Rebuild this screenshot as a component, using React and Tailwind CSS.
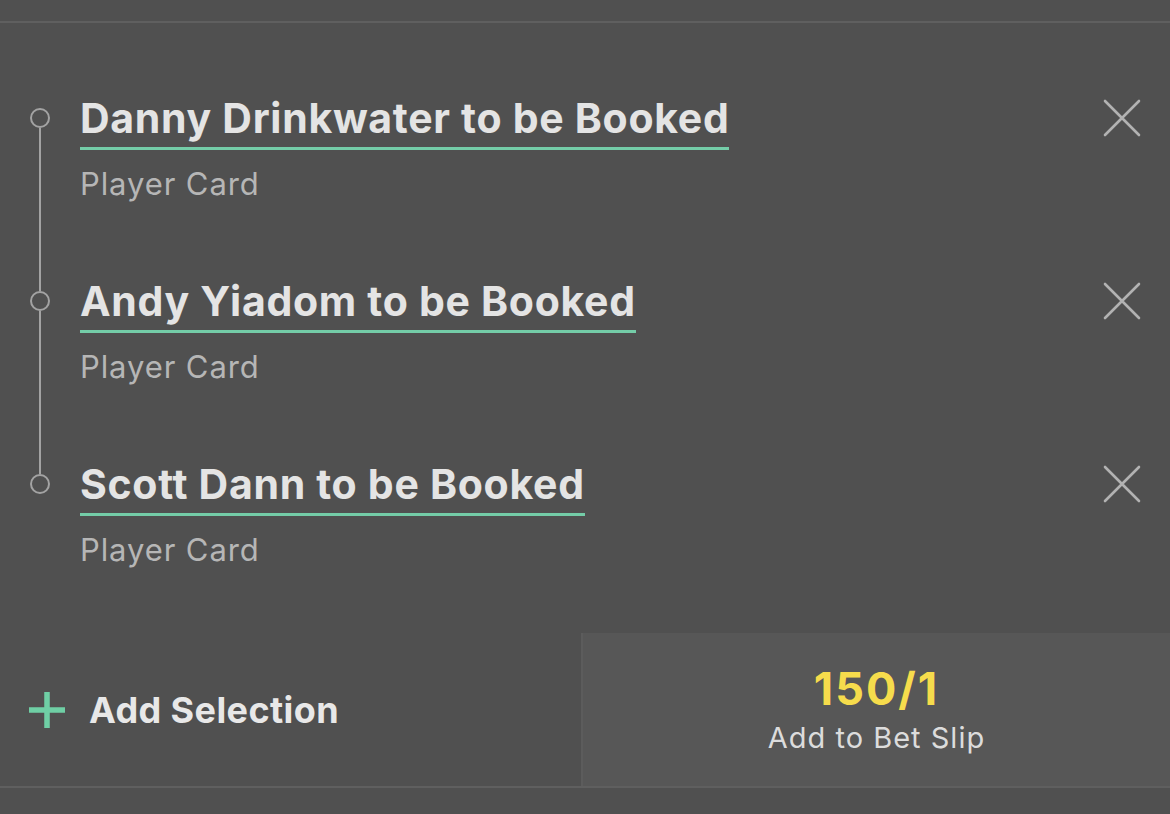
const LEGS = [
  { title: 'Danny Drinkwater to be Booked', market: 'Player Card' },
  { title: 'Andy Yiadom to be Booked', market: 'Player Card' },
  { title: 'Scott Dann to be Booked', market: 'Player Card' },
]

function CloseIcon() {
  return (
    <svg width="38" height="38" viewBox="0 0 38 38" fill="none" stroke="currentColor" strokeWidth="2.6" strokeLinecap="round">
      <path d="M2 2L36 36M36 2L2 36" />
    </svg>
  )
}

function PlusIcon() {
  return (
    <svg width="38" height="38" viewBox="0 0 38 38" fill="none" stroke="currentColor" strokeWidth="5.5">
      <path d="M19 1V37M1 19H37" />
    </svg>
  )
}

function Leg({ leg, first, last }) {
  return (
    <div className={`flex ${last ? 'h-[173px]' : 'h-[183px]'}`}>
      {/* timeline rail */}
      <div className="flex w-[80px] flex-col items-center pr-[1px]">
        <div className={`h-[14px] w-[2px] ${first ? 'bg-transparent' : 'bg-[#a3a3a3]'}`} />
        <div className="h-[20px] w-[20px] rounded-full border-2 border-[#a3a3a3]" />
        <div className={`w-[2px] flex-1 ${last ? 'bg-transparent' : 'bg-[#a3a3a3]'}`} />
      </div>

      <div className="flex-1">
        <span className="inline-block border-b-[3px] border-[#74cda8] pb-[5px] text-[41px] font-bold leading-[48px] tracking-[0.7px] text-[#e4e4e4]">
          {leg.title}
        </span>
        <p className="mt-[15px] text-[31px] leading-[37px] tracking-[0.9px] text-[#b6b6b6]">{leg.market}</p>
      </div>

      <button className="mr-[29px] mt-[5px] h-[38px] w-[38px] text-[#b2b2b2]">
        <CloseIcon />
      </button>
    </div>
  )
}

export default function App() {
  return (
    <div className="h-[814px] w-[1170px] bg-[#505050] font-['Inter',sans-serif]">
      <div className="h-[21px]" />
      <div className="h-[2px] bg-[#5f5f5f]" />

      <div className="pt-[71px]">
        {LEGS.map((leg, i) => (
          <Leg key={i} leg={leg} first={i === 0} last={i === LEGS.length - 1} />
        ))}
      </div>

      <div className="flex h-[153px]">
        <div className="flex w-[581px] items-center pl-[28px]">
          <span className="text-[#6fcfa5]">
            <PlusIcon />
          </span>
          <span className="ml-[23px] text-[36px] font-bold tracking-[0.4px] text-[#e8e8e8]">Add Selection</span>
        </div>
        <div className="flex flex-1 flex-col items-center justify-center border-l-2 border-[#5c5c5c] bg-[#575757]">
          <span className="text-[45px] font-bold leading-[50px] tracking-[2px] text-[#f6dc4c]">150/1</span>
          <span className="mt-[7px] text-[29px] leading-[34px] tracking-[1px] text-[#dcdcdc]">Add to Bet Slip</span>
        </div>
      </div>

      <div className="h-[2px] bg-[#5f5f5f]" />
    </div>
  )
}
